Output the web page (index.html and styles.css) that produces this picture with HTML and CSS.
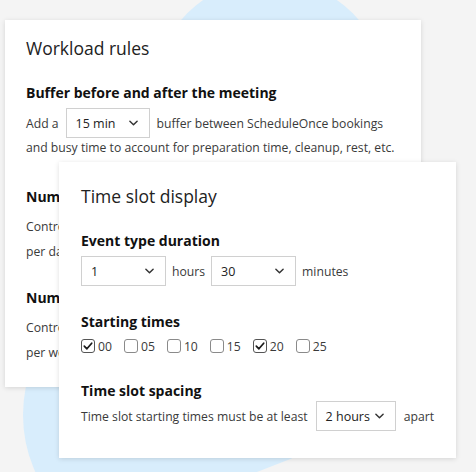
FILE: index.html
```html
<!DOCTYPE html>
<html lang="en">
<head>
  <meta charset="UTF-8">
  <meta name="viewport" content="width=device-width, initial-scale=1.0">
  <title>Workload rules</title>
  <link rel="stylesheet" href="styles.css">
</head>
<body>
  <div class="stage">
    <!-- decorative blue blobs behind the cards -->
    <svg class="blob" viewBox="0 0 476 472" width="476" height="472">
      <circle cx="270" cy="96" r="117" fill="#d8edfc"/>
      <circle cx="161" cy="415" r="138" fill="#d8edfc"/>
      <polygon points="442,400 185,500 476,500 476,400" fill="#f4f4f4"/>
    </svg>

    <!-- Workload rules card -->
    <section class="card card-workload">
      <h2 class="card-title">Workload rules</h2>

      <div class="rule rule-buffer">
        <h3 class="rule-title">Buffer before and after the meeting</h3>
        <div class="inline-row">
          <span>Add a</span>
          <div class="select select-buffer">
            <span>15 min</span>
            <svg class="chevron" viewBox="0 0 10 6" width="9" height="6"><polyline points="1,1 5,5 9,1"/></svg>
          </div>
          <span>buffer between ScheduleOnce bookings</span>
        </div>
        <p class="rule-line">and busy time to account for preparation time, cleanup, rest, etc.</p>
      </div>

      <div class="rule rule-day">
        <h3 class="rule-title">Number of meetings per day</h3>
        <p class="rule-text">Control the maximum number of ScheduleOnce bookings you can receive<br>per day to keep your workload balanced.</p>
      </div>

      <div class="rule rule-week">
        <h3 class="rule-title">Number of meetings per week</h3>
        <p class="rule-text">Control the maximum number of ScheduleOnce bookings you can receive<br>per week to keep your workload balanced.</p>
      </div>
    </section>

    <!-- Time slot display card -->
    <section class="card card-slots">
      <h2 class="card-title">Time slot display</h2>

      <div class="rule rule-duration">
        <h3 class="rule-title">Event type duration</h3>
        <div class="inline-row">
          <div class="select select-short">
            <span>1</span>
            <svg class="chevron" viewBox="0 0 10 6" width="9" height="6"><polyline points="1,1 5,5 9,1"/></svg>
          </div>
          <span>hours</span>
          <div class="select select-short">
            <span>30</span>
            <svg class="chevron" viewBox="0 0 10 6" width="9" height="6"><polyline points="1,1 5,5 9,1"/></svg>
          </div>
          <span>minutes</span>
        </div>
      </div>

      <div class="rule rule-start">
        <h3 class="rule-title">Starting times</h3>
        <div class="check-row">
          <label class="check"><span class="box checked"><svg viewBox="0 0 14 14" width="14" height="14"><path d="M3.3 7.2 L5.9 9.8 L10.7 4.2"/></svg></span>00</label>
          <label class="check"><span class="box"></span>05</label>
          <label class="check"><span class="box"></span>10</label>
          <label class="check"><span class="box"></span>15</label>
          <label class="check"><span class="box checked"><svg viewBox="0 0 14 14" width="14" height="14"><path d="M3.3 7.2 L5.9 9.8 L10.7 4.2"/></svg></span>20</label>
          <label class="check"><span class="box"></span>25</label>
        </div>
      </div>

      <div class="rule rule-spacing">
        <h3 class="rule-title">Time slot spacing</h3>
        <div class="inline-row">
          <span>Time slot starting times must be at least</span>
          <div class="select select-buffer">
            <span>2 hours</span>
            <svg class="chevron" viewBox="0 0 10 6" width="9" height="6"><polyline points="1,1 5,5 9,1"/></svg>
          </div>
          <span>apart</span>
        </div>
      </div>
    </section>
  </div>
</body>
</html>
```

FILE: styles.css
```css
* {
  box-sizing: border-box;
}
body {
  margin: 0;
  background: #f4f4f4;
  font-family: "Open Sans", "Noto Sans", sans-serif;
  color: #3a3a3a;
}
.stage {
  position: relative;
  width: 476px;
  height: 472px;
  overflow: hidden;
}
.blob {
  position: absolute;
  top: 0;
  left: 0;
}
.card {
  position: relative;
  background: #fff;
  box-shadow: 0 1px 5px rgba(0, 0, 0, 0.13);
}
.card-workload {
  margin: 20px 0 0 5px;
  width: 416px;
  height: 367px;
  padding: 16px 21px 0;
}
.card-slots {
  position: absolute;
  left: 59px;
  top: 162px;
  width: 397px;
  padding: 22px 22px 27px;
}
.card-title {
  margin: 0;
  font-size: 17.5px;
  line-height: 24px;
  font-weight: 400;
  color: #222;
}
.rule-title {
  margin: 0;
  font-size: 14px;
  line-height: 20px;
  font-weight: 700;
  color: #111;
}
.rule {
  margin-top: 24px;
}
.rule-buffer {
  margin-top: 23px;
}
.rule-day {
  margin-top: 29px;
}
.rule-duration {
  margin-top: 23px;
}
.rule-start,
.rule-spacing {
  margin-top: 26px;
}
.inline-row {
  display: flex;
  align-items: center;
  gap: 7px;
  height: 30px;
  margin-top: 5px;
  font-size: 12.2px;
  white-space: nowrap;
}
.rule-duration .inline-row {
  gap: 6px;
}
.rule-spacing .inline-row {
  margin-top: 0;
  gap: 8px;
}
.rule-line {
  margin: 0;
  font-size: 12.2px;
  line-height: 20px;
  white-space: nowrap;
}
.rule-text {
  margin: 7px 0 0;
  font-size: 12.2px;
  line-height: 25px;
  white-space: nowrap;
}
.select {
  display: flex;
  align-items: center;
  justify-content: space-between;
  height: 30px;
  padding: 0 11px 0 9px;
  border: 1px solid #d0d0d0;
  background: #fff;
  font-size: 12.5px;
  color: #222;
}
.select-buffer {
  width: 84px;
}
.select-short {
  width: 85px;
}
.chevron polyline {
  fill: none;
  stroke: #333;
  stroke-width: 1.6;
  stroke-linecap: round;
  stroke-linejoin: round;
}
.check-row {
  display: flex;
  align-items: center;
  gap: 12px;
  height: 18px;
  margin-top: 5px;
  font-size: 12.2px;
}
.check {
  display: flex;
  align-items: center;
  gap: 3px;
}
.box {
  display: block;
  width: 14px;
  height: 14px;
  border: 1px solid #8a8a8a;
  border-radius: 3px;
  background: #fff;
}
.box svg {
  display: block;
  margin: -1px;
}
.box.checked {
  border-color: #555;
}
.box path {
  fill: none;
  stroke: #1a1a1a;
  stroke-width: 1.7;
  stroke-linecap: round;
  stroke-linejoin: round;
}
```
